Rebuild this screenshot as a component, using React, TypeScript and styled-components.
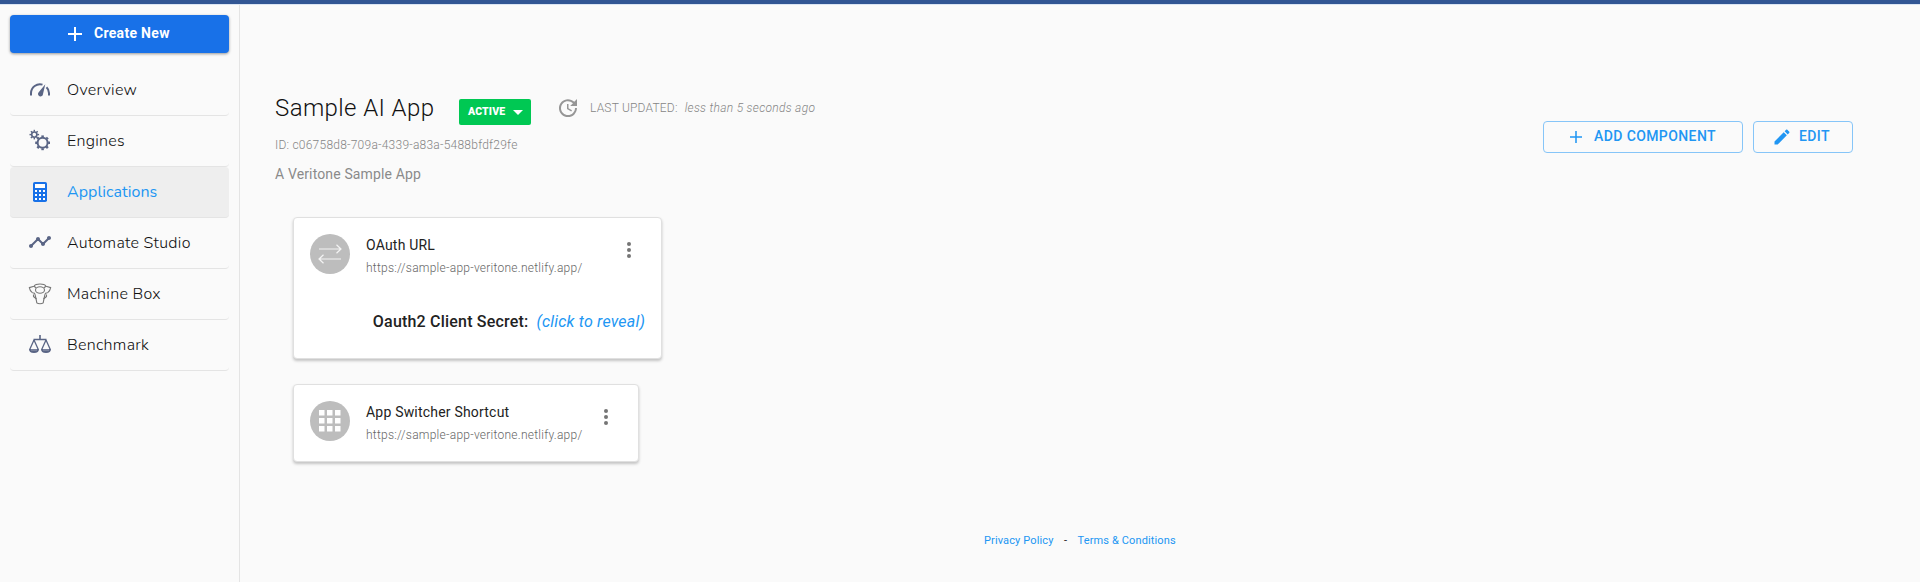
import React from "react";
import styled, { createGlobalStyle, css } from "styled-components";

const GlobalStyle = createGlobalStyle`
  * { box-sizing: border-box; }
  body { margin: 0; background: #fafafa; font-family: Roboto, "Liberation Sans", sans-serif; }
`;

const Page = styled.div`
  height: 582px;
  display: flex;
  flex-direction: column;
  overflow: hidden;
`;

const TopBar = styled.div`
  height: 5px;
  flex: none;
  background: #325694;
  border-bottom: 1px solid #dbe5f3;
`;

const Body = styled.div`
  flex: 1;
  display: flex;
`;

const Sidebar = styled.nav`
  width: 240px;
  padding: 10px 11px 0 10px;
  border-right: 1px solid #e4e4e4;
`;

const CreateButton = styled.button`
  width: 219px;
  height: 38px;
  margin-bottom: 12px;
  padding: 0;
  display: flex;
  align-items: center;
  border: 0;
  border-radius: 4px;
  background: #1871e8;
  color: #fff;
  box-shadow: 0 1px 3px rgba(0, 0, 0, 0.4);
  font: 700 14px/20px Roboto, sans-serif;
  letter-spacing: 0.3px;
  svg { margin: 0 12px 0 58px; }
  span { padding-bottom: 2px; }
`;

const NavItem = styled.a<{ $active?: boolean; $spacing: number }>`
  width: 219px;
  height: 51px;
  display: flex;
  align-items: center;
  padding: 0 0 2px 18px;
  gap: 15px;
  border-bottom: 1px solid #e4e4e4;
  border-radius: 4px;
  font: 300 16px/24px Nunito, "Open Sans", sans-serif;
  letter-spacing: ${(p) => p.$spacing}px;
  white-space: nowrap;
  color: #111;
  ${(p) => p.$active && css`
    background: #eeeeee;
    color: #2196f3;
    font-weight: 400;
  `}
  svg { flex: none; }
  span { padding-top: 2px; }
`;

const Main = styled.main`
  flex: 1;
  display: flex;
  flex-direction: column;
  padding: 87px 67px 0 35px;
`;

const Header = styled.header`
  display: flex;
  justify-content: space-between;
  height: 124px;
`;

const TitleRow = styled.div`
  display: flex;
  height: 36px;
`;

const Title = styled.h1`
  margin: 0;
  width: 184px;
  font-size: 24px;
  line-height: 32px;
  font-weight: 300;
  letter-spacing: 0.4px;
  color: #111;
`;

const Status = styled.button`
  width: 72px;
  height: 26px;
  margin-top: 7px;
  padding: 0 8px 0 9px;
  display: flex;
  align-items: center;
  justify-content: space-between;
  border: 0;
  border-radius: 2px;
  background: #00c853;
  color: #fff;
  font: 900 10.5px/16px Roboto, sans-serif;
  letter-spacing: 0.15px;
`;

const Updated = styled.div`
  display: flex;
  height: 32px;
  align-items: center;
  margin-left: 25px;
  font-size: 12px;
  font-weight: 300;
  color: #858585;
  svg { margin-right: 10px; }
  span { letter-spacing: 0.2px; }
  em { margin-left: 7px; letter-spacing: 0.3px; }
`;

const AppId = styled.div`
  margin-top: 7px;
  font-size: 12px;
  line-height: 20px;
  font-weight: 300;
  letter-spacing: 0.23px;
  color: #858585;
`;

const Description = styled.div`
  margin-top: 9px;
  font-size: 14px;
  line-height: 20px;
  letter-spacing: 0.14px;
  color: #8a8a8a;
`;

const Actions = styled.div`
  display: flex;
  gap: 10px;
  margin-top: 29px;
`;

const OutlineButton = styled.button<{ $width: number; $pad: number; $gap: number }>`
  width: ${(p) => p.$width}px;
  height: 32px;
  padding: 0 0 0 ${(p) => p.$pad}px;
  display: flex;
  align-items: center;
  gap: ${(p) => p.$gap}px;
  border: 1px solid #86c5f8;
  border-radius: 4px;
  background: transparent;
  color: #2196f3;
  font: 500 14px/20px Roboto, sans-serif;
  letter-spacing: 0.4px;
  white-space: nowrap;
  span { padding-bottom: 2px; }
`;

const Cards = styled.section`
  display: flex;
  flex-direction: column;
  align-items: flex-start;
  gap: 25px;
  padding: 1px 0 0 18px;
`;

const Card = styled.article<{ $width: number; $height: number }>`
  width: ${(p) => p.$width}px;
  height: ${(p) => p.$height}px;
  padding: 16px;
  border: 1px solid #e0e0e0;
  border-radius: 4px;
  background: #fff;
  box-shadow: 0 2px 3px rgba(0, 0, 0, 0.22);
`;

const CardHead = styled.div`
  display: flex;
  height: 40px;
`;

const Avatar = styled.div`
  width: 40px;
  height: 40px;
  flex: none;
  display: flex;
  align-items: center;
  justify-content: center;
  border-radius: 50%;
  background: #bdbdbd;
`;

const CardText = styled.div`
  flex: 1;
  margin-left: 16px;
  white-space: nowrap;
`;

const CardTitle = styled.div`
  font-size: 14px;
  line-height: 22px;
  letter-spacing: 0.2px;
  color: #222;
`;

const CardUrl = styled.div`
  margin-top: 2px;
  font-size: 12px;
  line-height: 20px;
  font-weight: 300;
  letter-spacing: 0.25px;
  color: #666;
`;

const Menu = styled.div<{ $right: number }>`
  margin: 4px ${(p) => p.$right}px 0 0;
  height: 24px;
`;

const Secret = styled.div`
  display: flex;
  justify-content: flex-end;
  margin-top: 36px;
  font-size: 16px;
  line-height: 24px;
  letter-spacing: 0.2px;
  color: #222;
  b { font-weight: 500; }
  em { margin-left: 8px; color: #2196f3; }
`;

const Footer = styled.footer`
  display: flex;
  margin: 69px 0 0 709px;
  font-size: 11px;
  line-height: 20px;
  letter-spacing: 0.13px;
  color: #2196f3;
  i { width: 24px; text-align: center; font-style: normal; color: #222; }
`;

const Plus = ({ size, stroke = 2 }: { size: number; stroke?: number }) => (
  <svg width={size} height={size} viewBox="0 0 14 14" stroke="currentColor" strokeWidth={stroke}>
    <path d="M7 0v14M0 7h14" />
  </svg>
);

const GaugeIcon = () => (
  <svg width="24" height="24" viewBox="0 0 24 24" fill="none" stroke="#5a6585" strokeWidth="2">
    <path d="M3 18.5V16a9 9 0 0 1 11.5-8.4M18.5 10.2c1.7 1.6 2.5 3.6 2.5 5.8v2.5" />
    <path d="M17.3 7.3 15 17a2.5 2.5 0 1 1-4.3-1.7z" fill="#5a6585" stroke="none" />
  </svg>
);

const Gear = ({ x, y, r, hole, teeth }: { x: number; y: number; r: number; hole: number; teeth: number }) => (
  <g transform={`translate(${x} ${y})`}>
    <circle r={(r + hole) / 2} fill="none" stroke="#5a6585" strokeWidth={r - hole} />
    {Array.from({ length: teeth }, (_, i) => (
      <path key={i} d={`M0 ${-r + 0.5}V${-r - 1.4}`} stroke="#5a6585" strokeWidth={r * 0.42} transform={`rotate(${(i * 360) / teeth})`} />
    ))}
  </g>
);

const GearsIcon = () => (
  <svg width="24" height="24" viewBox="0 0 24 24">
    <Gear x={6.3} y={6.6} r={3.4} hole={1.8} teeth={8} />
    <Gear x={14.6} y={14.8} r={6} hole={4} teeth={8} />
  </svg>
);

const CalculatorIcon = () => (
  <svg width="24" height="24" viewBox="0 0 24 24">
    <rect x="5" y="3" width="14" height="20" rx="1.8" fill="#1871e8" />
    <path d="M7 5h10v4H7zM7 11h2v2H7zM11 11h2v2h-2zM15 11h2v2h-2zM7 15h2v2H7zM11 15h2v2h-2zM15 15h2v2h-2zM7 19h2v2H7zM11 19h2v2h-2zM15 19h2v2h-2z" fill="#fff" />
  </svg>
);

const TimelineIcon = () => (
  <svg width="24" height="24" viewBox="0 0 24 24" fill="#5a6585">
    <path d="M23 8c0 1.100-.9 2-2 2-.18 0-.35-.02-.51-.07l-3.560 3.550c.05.16.07.34.07.52 0 1.100-.9 2-2 2s-2-.9-2-2c0-.18.02-.36.07-.52l-2.550-2.550c-.16.05-.34.07-.52.07s-.36-.02-.52-.07l-4.550 4.560c.05.16.07.33.07.51 0 1.100-.9 2-2 2s-2-.9-2-2 .9-2 2-2c.18 0 .35.02.51.07l4.560-4.550C8.020 9.360 8 9.180 8 9c0-1.100.9-2 2-2s2 .9 2 2c0 .18-.02.36-.07.52l2.550 2.550c.16-.05.34-.07.52-.07s.36.02.52.07l3.550-3.560C19.020 8.350 19 8.180 19 8c0-1.100.9-2 2-2s2 .9 2 2z" />
  </svg>
);

const MachineIcon = () => (
  <svg width="24" height="24" viewBox="0 0 24 24" fill="none" stroke="#777" strokeWidth="1.1" strokeLinejoin="round">
    <path d="M1.300 6.600 6 5.200C8 2.300 16 2.300 18 5.200l4.700 1.400c-.4 2.300-1.400 3.800-3 5-.7.500-1.500.2-2.200.6-.7 1-.8 2.500-1.300 4.500l-1 5.200c-1.500 1.200-4.900 1.200-6.400 0l-1-5.200c-.5-2-.6-3.500-1.300-4.500-.7-.4-1.500-.1-2.200-.6-1.600-1.200-2.600-2.700-3-5z" />
    <ellipse cx="12" cy="9" rx="4.500" ry="3.300" />
    <path d="M5.500 13.500v2l3 2.500M18.500 13.500v2l-3 2.500M6 5.200l2 1.600M18 5.200l-2 1.600" />
  </svg>
);

const ScaleIcon = () => (
  <svg width="24" height="24" viewBox="0 0 24 24" fill="none" stroke="#5a6585" strokeWidth="1.300">
    <path d="M12 3v5M5.500 7.500h13" strokeWidth="1.600" />
    <path d="m6 8-4.300 9.500M6 8l4.300 9.500M18 8l-4.300 9.500M18 8l4.300 9.500" />
    <path d="M1 17h10c0 2.500-1.600 4-5 4s-5-1.500-5-4zM13 17h10c0 2.500-1.600 4-5 4s-5-1.500-5-4z" fill="#5a6585" stroke="none" />
    <path d="M3 18h6M15 18h6" stroke="#b7bccb" strokeWidth="0.700" />
  </svg>
);

const UpdateIcon = () => (
  <svg width="24" height="24" viewBox="0 0 24 24" fill="#969696">
    <path d="M21 10.120h-6.780l2.740-2.820c-2.730-2.700-7.150-2.800-9.880-.1-2.730 2.710-2.730 7.080 0 9.790s7.150 2.710 9.880 0C18.320 15.650 19 14.080 19 12.100h2c0 1.980-.88 4.550-2.640 6.290-3.510 3.480-9.210 3.480-12.720 0-3.500-3.470-3.530-9.110-.02-12.580s9.140-3.470 12.650 0L21 3v7.120zM12.500 8v4.250l3.500 2.080-.72 1.210L11 13V8h1.500z" />
  </svg>
);

const PencilIcon = () => (
  <svg width="20" height="20" viewBox="0 0 24 24" fill="currentColor">
    <path d="M3 17.250V21h3.750L17.810 9.940l-3.750-3.750L3 17.250zM20.710 7.040c.39-.39.39-1.020 0-1.410l-2.340-2.340c-.39-.39-1.020-.39-1.410 0l-1.830 1.830 3.750 3.750 1.830-1.830z" />
  </svg>
);

const ArrowsIcon = () => (
  <svg width="24" height="24" viewBox="0 0 24 24" fill="none" stroke="#f4f4f4" strokeWidth="1.200">
    <path d="M1 7h22M18.500 2.700 23 7l-4.500 4.300M23 17H1M5.500 12.700 1 17l4.500 4.300" />
  </svg>
);

const GridIcon = () => (
  <svg width="22" height="22" viewBox="0 0 22 22" fill="#fff">
    {[0, 8, 16].flatMap((y) => [0, 8, 16].map((x) => <rect key={`${x}-${y}`} x={x} y={y} width="5.500" height="5.500" />))}
  </svg>
);

const Dots = () => (
  <svg width="24" height="24" viewBox="0 0 24 24" fill="#757575">
    <circle cx="12" cy="6" r="2" /><circle cx="12" cy="12" r="2" /><circle cx="12" cy="18" r="2" />
  </svg>
);

const navItems = [
  { label: "Overview", icon: <GaugeIcon />, spacing: 0.28 },
  { label: "Engines", icon: <GearsIcon />, spacing: 0.28 },
  { label: "Applications", icon: <CalculatorIcon />, spacing: 0.05, active: true },
  { label: "Automate Studio", icon: <TimelineIcon />, spacing: 0.28 },
  { label: "Machine Box", icon: <MachineIcon />, spacing: 0.28 },
  { label: "Benchmark", icon: <ScaleIcon />, spacing: 0.28 },
];

export default function App() {
  return (
    <Page>
      <GlobalStyle />
      <TopBar />
      <Body>
        <Sidebar>
          <CreateButton><Plus size={14} /><span>Create New</span></CreateButton>
          {navItems.map((n) => (
            <NavItem key={n.label} $active={n.active} $spacing={n.spacing}>{n.icon}<span>{n.label}</span></NavItem>
          ))}
        </Sidebar>
        <Main>
          <Header>
            <div>
              <TitleRow>
                <Title>Sample AI App</Title>
                <Status>
                  ACTIVE
                  <svg width="10" height="5" viewBox="0 0 10 5" fill="#fff"><path d="M0 0h10L5 5z" /></svg>
                </Status>
                <Updated><UpdateIcon /><span>LAST UPDATED:</span><em>less than 5 seconds ago</em></Updated>
              </TitleRow>
              <AppId>ID: c06758d8-709a-4339-a83a-5488bfdf29fe</AppId>
              <Description>A Veritone Sample App</Description>
            </div>
            <Actions>
              <OutlineButton $width={200} $pad={26} $gap={12}><Plus size={12} stroke={1.8} /><span>ADD COMPONENT</span></OutlineButton>
              <OutlineButton $width={100} $pad={18} $gap={7}><PencilIcon /><span>EDIT</span></OutlineButton>
            </Actions>
          </Header>
          <Cards>
            <Card $width={369} $height={142}>
              <CardHead>
                <Avatar><ArrowsIcon /></Avatar>
                <CardText>
                  <CardTitle>OAuth URL</CardTitle>
                  <CardUrl>https://sample-app-veritone.netlify.app/</CardUrl>
                </CardText>
                <Menu $right={4}><Dots /></Menu>
              </CardHead>
              <Secret><b>Oauth2 Client Secret:</b><em>(click to reveal)</em></Secret>
            </Card>
            <Card $width={346} $height={78}>
              <CardHead>
                <Avatar><GridIcon /></Avatar>
                <CardText>
                  <CardTitle>App Switcher Shortcut</CardTitle>
                  <CardUrl>https://sample-app-veritone.netlify.app/</CardUrl>
                </CardText>
                <Menu $right={4}><Dots /></Menu>
              </CardHead>
            </Card>
          </Cards>
          <Footer><span>Privacy Policy</span><i>-</i><span>Terms &amp; Conditions</span></Footer>
        </Main>
      </Body>
    </Page>
  );
}
